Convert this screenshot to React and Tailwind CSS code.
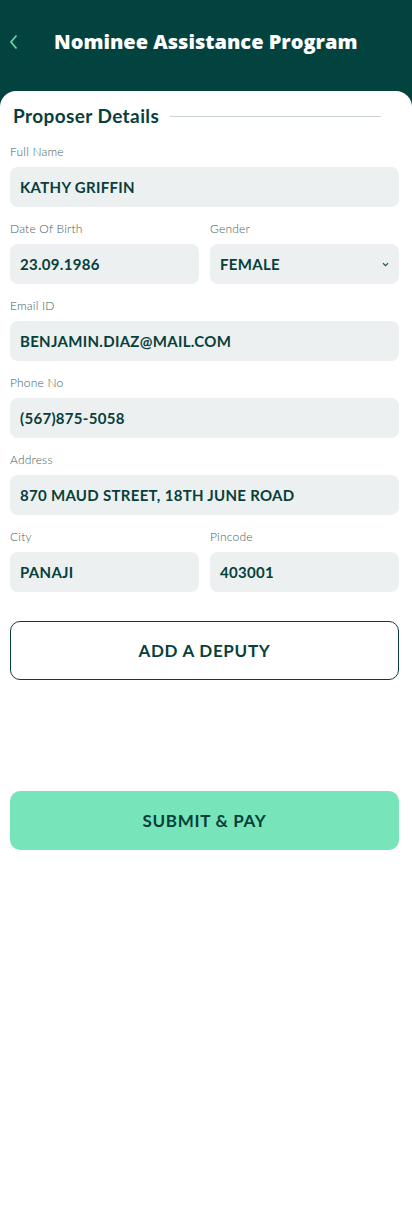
import React from "react";

const Label = ({ children }) => (
  <div className="h-4 text-[12px] leading-4 font-light text-[#3d625e] mb-[7px] tracking-[0.2px]">
    {children}
  </div>
);

const Field = ({ label, value, select }) => (
  <div className="flex flex-col min-w-0">
    <Label>{label}</Label>
    <div className="h-10 rounded-lg bg-[#ecf0f0] flex items-center px-[10px] justify-between">
      <span className="text-[15px] font-bold text-[#073f3b] tracking-[0.3px]">{value}</span>
      {select && (
        <svg width="7" height="5" viewBox="0 0 7 5">
          <path d="M1 1.2 L3.5 3.6 L6 1.2" fill="none" stroke="#2a5450" strokeWidth="1.2" />
        </svg>
      )}
    </div>
  </div>
);

export default function App() {
  return (
    <div className="w-[412px] min-h-[1208px] bg-[#03433f] font-['Lato',sans-serif]">
      <div className="h-[91px] flex items-center">
        <svg width="10" height="16" viewBox="0 0 10 16" className="ml-[9px] mb-[8px]">
          <path d="M7.5 1.5 L2 8 L7.5 14.5" fill="none" stroke="#5fd8a6" strokeWidth="1.8" />
        </svg>
        <h1 className="ml-[35px] mb-[8px] text-white text-[20px] font-extrabold font-['Open_Sans',sans-serif]">
          Nominee Assistance Program
        </h1>
      </div>
      <div className="bg-white rounded-t-[16px] min-h-[1117px] pl-[10px] pr-[13px] pt-[13px]">
        <div className="flex items-center h-6 pl-[3px]">
          <span className="text-[19px] font-bold text-[#073f3b] tracking-[0.4px] whitespace-nowrap">Proposer Details</span>
          <div className="flex-1 h-px bg-[#c9d3d2] ml-[11px] mr-[18px]" />
        </div>
        <div className="mt-4 flex flex-col gap-[14px]">
          <Field label="Full Name" value="KATHY GRIFFIN" />
          <div className="grid grid-cols-2 gap-[11px]">
            <Field label="Date Of Birth" value="23.09.1986" />
            <Field label="Gender" value="FEMALE" select />
          </div>
          <Field label="Email ID" value="BENJAMIN.DIAZ@MAIL.COM" />
          <Field label="Phone No" value="(567)875-5058" />
          <Field label="Address" value="870 MAUD STREET, 18TH JUNE ROAD" />
          <div className="grid grid-cols-2 gap-[11px]">
            <Field label="City" value="PANAJI" />
            <Field label="Pincode" value="403001" />
          </div>
        </div>
        <button className="mt-[29px] w-full h-[59px] rounded-[10px] border border-[#073f3b] text-[17px] font-bold text-[#073f3b] tracking-[0.7px]">
          ADD A DEPUTY
        </button>
        <button className="mt-[111px] w-full h-[59px] rounded-[10px] bg-[#77e5b9] text-[17px] font-bold text-[#073f3b] tracking-[0.7px]">
          SUBMIT &amp; PAY
        </button>
      </div>
    </div>
  );
}
